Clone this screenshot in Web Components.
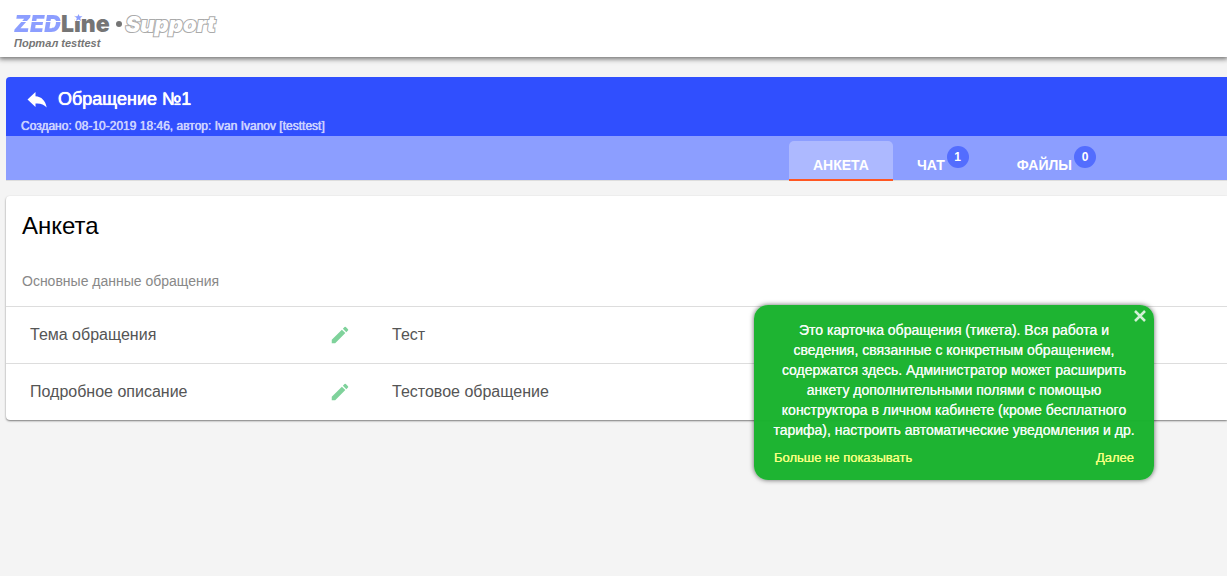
<!DOCTYPE html>
<html lang="ru">
<head>
<meta charset="utf-8">
<meta name="viewport" content="width=device-width, initial-scale=1">
<title>ZEDLine Support</title>
<style>
    body {
        margin: 0;
        background: #f4f4f4;
        color: #555;
        font-family: "Liberation Sans", Arial, sans-serif;
        font-size: 16px;
    }
</style>
</head>
<body>
<ticket-page>
    <site-header slot="header" portal="Портал testtest"></site-header>
    <ticket-header number="Обращение №1" info="Создано: 08-10-2019 18:46, автор: Ivan Ivanov [testtest]">
        <ticket-tab active>АНКЕТА</ticket-tab>
        <ticket-tab count="1">ЧАТ</ticket-tab>
        <ticket-tab count="0">ФАЙЛЫ</ticket-tab>
    </ticket-header>
    <ticket-form></ticket-form>
    <hint-popup slot="hint">Это карточка обращения (тикета). Вся работа и сведения, связанные с конкретным обращением, содержатся здесь. Администратор может расширить анкету дополнительными полями с помощью конструктора в личном кабинете (кроме бесплатного тарифа), настроить автоматические уведомления и др.</hint-popup>
</ticket-page>

<script>
class BaseElement extends HTMLElement {
    connectedCallback() {
        if (this.shadowRoot) return;
        this.attachShadow({mode: 'open'});
        this.shadowRoot.innerHTML = this.getHtml();
    }
}

customElements.define('ticket-page', class extends BaseElement {
    getHtml() {
        return `
        <style>
        :host {
            display: block;
            position: relative;
            min-height: 100vh;
            overflow: hidden;
        }
        main {
            display: flex;
            flex-direction: column;
            gap: 15px;
            padding: 20px 0 20px 6px;
        }
        </style>
        <slot name="header"></slot>
        <main><slot></slot></main>
        <slot name="hint"></slot>`;
    }
});

customElements.define('site-header', class extends BaseElement {
    getHtml() {
        return `
        <style>
        :host {
            display: block;
            padding: 12px 14px 7px;
            background: #fff;
            box-shadow: 0 1px 5px 1px rgba(0, 0, 0, .55);
            color: #757575;
        }
        a {
            display: flex;
            align-items: center;
            color: inherit;
            text-decoration: none;
            font-family: Inter, sans-serif;
            font-size: 23px;
            font-weight: 900;
            line-height: 24px;
        }
        .zed {
            color: transparent;
            background: linear-gradient(#8c9eff 9px, #fff 9px, #fff 10px, #8c9eff 10px);
            -webkit-background-clip: text;
            background-clip: text;
            font-style: italic;
        }
        .line {
            position: relative;
        }
        .star {
            position: absolute;
            left: 13px;
            top: 2px;
        }
        .dot {
            width: 6px;
            height: 6px;
            margin: 0 4px 0 6px;
            border-radius: 50%;
            background: #757575;
        }
        .support {
            color: #fff;
            font-size: 22px;
            font-style: italic;
            paint-order: stroke fill;
            -webkit-text-stroke: 2px #aaa;
        }
        .portal {
            font-size: 11px;
            font-weight: bold;
            font-style: italic;
            line-height: 14px;
        }
        </style>
        <a href="#">
            <span class="zed">ZED</span>
            <span class="line">Line<svg class="star" width="9" height="7" viewBox="0 0 9 7"><path fill="#fff" d="M1 0h6v7H1z"/><path fill="#8c9eff" d="M4.500 0l1 2.300h3L6.200 4l.8 3-2.500-1.600L2 7l.8-3L.5 2.300h3z"/></svg></span>
            <span class="dot"></span>
            <span class="support">Support</span>
        </a>
        <div class="portal">${this.getAttribute('portal')}</div>`;
    }
});

customElements.define('ticket-header', class extends BaseElement {
    getHtml() {
        return `
        <style>
        :host {
            display: block;
            color: #fff;
        }
        header {
            padding: 10px 15px 2px;
            border-radius: 4px 0 0 0;
            background: #304ffe;
        }
        .title {
            display: flex;
            align-items: center;
            gap: 10px;
            padding-left: 5px;
        }
        button {
            padding: 0;
            border: 0;
            background: none;
            color: inherit;
            line-height: 0;
            cursor: pointer;
        }
        h1 {
            margin: 0;
            font-size: 18px;
            font-weight: normal;
            line-height: 24px;
            text-shadow: 0 0 0 #fff, 0 0 1px #fff;
        }
        p {
            margin: 7px 0 0;
            font-size: 12px;
            line-height: 16px;
            color: #cbd2ff;
            text-shadow: 0 0 0 #cbd2ff, 0 0 1px #cbd2ff;
        }
        nav {
            display: flex;
            justify-content: flex-end;
            height: 39px;
            padding: 5px 107px 0 0;
            border-bottom: 1px solid #ddd;
            background: #8c9eff;
        }
        </style>
        <header>
            <div class="title">
                <button aria-label="Назад"><svg width="22" height="22" viewBox="0 0 22 22"><path fill="currentColor" d="M1.500 11.500L9.500 4v4.200c6 .3 9.800 4.300 11.200 11.300-3-3.300-6-4.300-11.200-4v3.500z"/></svg></button>
                <h1>${this.getAttribute('number')}</h1>
            </div>
            <p>${this.getAttribute('info')}</p>
        </header>
        <nav><slot></slot></nav>`;
    }
});

customElements.define('ticket-tab', class extends BaseElement {
    getHtml() {
        const count = this.getAttribute('count');
        return `
        <style>
        :host {
            display: block;
            height: 40px;
        }
        a {
            box-sizing: border-box;
            display: flex;
            gap: 2px;
            height: 40px;
            padding: 5px 24px 0;
            border-bottom: 2px solid transparent;
            color: #fff;
            font-size: 14px;
            font-weight: bold;
            line-height: 38px;
            text-decoration: none;
        }
        .label {
            height: 33px;
        }
        :host([active]) a {
            border-radius: 5px 5px 0 0;
            border-bottom-color: #ff5722;
            background: #adb9ff;
        }
        .badge {
            width: 22px;
            height: 22px;
            border-radius: 50%;
            background: #536dfe;
            font-size: 12px;
            line-height: 22px;
            text-align: center;
        }
        </style>
        <a href="#"><span class="label"><slot></slot></span>${count === null ? '' : `<span class="badge">${count}</span>`}</a>`;
    }
});

customElements.define('ticket-form', class extends BaseElement {
    fields = [
        ['Тема обращения', 'Тест'],
        ['Подробное описание', 'Тестовое обращение']
    ];

    getRow([name, value]) {
        return `
            <tr>
                <th scope="row">${name}</th>
                <td class="edit">
                    <button aria-label="Изменить: ${name}"><svg width="22" height="22" viewBox="0 0 24 24"><path fill="#7fd29b" d="M3 17.250V21h3.750L17.810 9.940l-3.750-3.750L3 17.250zM20.710 7.040a1 1 0 0 0 0-1.410l-2.340-2.340a1 1 0 0 0-1.410 0l-1.830 1.830 3.750 3.750 1.830-1.830z"/></svg></button>
                </td>
                <td>${value}</td>
            </tr>`;
    }

    getHtml() {
        return `
        <style>
        :host {
            display: block;
            border-radius: 4px 0 0 4px;
            background: #fff;
            box-shadow: 0 1px 2px rgba(0, 0, 0, .5);
        }
        h2 {
            margin: 0;
            padding: 16px 16px 0;
            color: #000;
            font-size: 24px;
            font-weight: normal;
            line-height: 28px;
        }
        p {
            margin: 0;
            padding: 31px 16px 15px;
            color: #888;
            font-size: 14px;
            line-height: 20px;
        }
        table {
            width: 100%;
            table-layout: fixed;
            border-collapse: collapse;
        }
        th, td {
            height: 56px;
            padding: 0;
            border-top: 1px solid #ddd;
            font-weight: normal;
            text-align: left;
        }
        th {
            width: 299px;
            padding-left: 24px;
        }
        .edit {
            width: 63px;
        }
        button {
            display: block;
            padding: 0;
            border: 0;
            background: none;
            cursor: pointer;
        }
        svg {
            display: block;
        }
        </style>
        <h2>Анкета</h2>
        <p>Основные данные обращения</p>
        <table>${this.fields.map(field => this.getRow(field)).join('')}</table>`;
    }
});

customElements.define('hint-popup', class extends BaseElement {
    getHtml() {
        return `
        <style>
        /* floats over the page content */
        :host {
            position: absolute;
            top: 305px;
            right: 73px;
            box-sizing: border-box;
            width: 400px;
            padding: 15px 18px 12px;
            border-radius: 14px;
            background: rgba(26, 178, 46, .98);
            box-shadow: 0 0 5px rgba(0, 0, 0, .6);
            color: #f4fbf5;
            font-size: 14px;
            line-height: 20px;
        }
        p {
            margin: 0;
            text-align: center;
            text-shadow: 0 0 0 #f4fbf5;
        }
        .links {
            display: flex;
            justify-content: space-between;
            margin-top: 8px;
            padding: 0 2px;
        }
        .links a {
            color: #f4ff81;
            font-size: 13px;
            text-decoration: none;
            text-shadow: 0 0 0 #f4ff81;
        }
        .close {
            position: absolute;
            top: 5px;
            right: 8px;
            padding: 0;
            border: 0;
            background: none;
            line-height: 0;
            cursor: pointer;
        }
        </style>
        <button class="close" aria-label="Закрыть"><svg width="12" height="12" viewBox="0 0 12 12"><path d="M1 1l10 10M11 1L1 11" stroke="#d2f0d5" stroke-width="2.500"/></svg></button>
        <p><slot></slot></p>
        <div class="links">
            <a href="#">Больше не показывать</a>
            <a href="#">Далее</a>
        </div>`;
    }
});
</script>
</body>
</html>
